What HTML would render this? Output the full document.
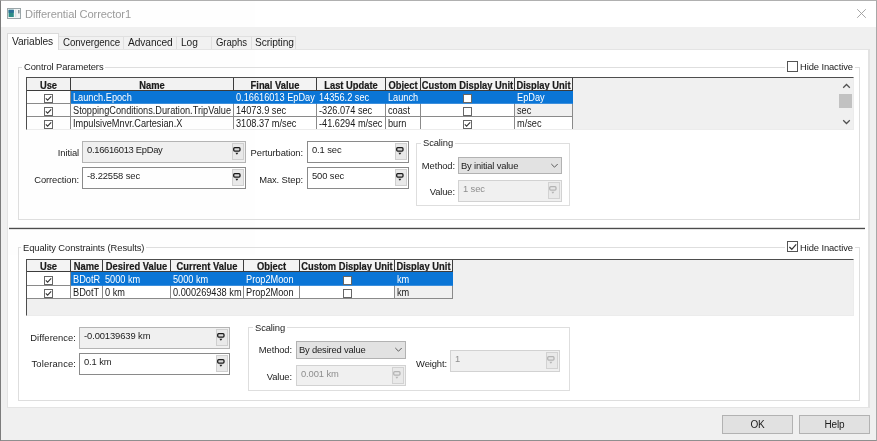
<!DOCTYPE html>
<html>
<head>
<meta charset="utf-8">
<title>Differential Corrector1</title>
<style>
html,body{margin:0;padding:0;}
body{width:877px;height:441px;overflow:hidden;background:#f0f0f0;font-family:"Liberation Sans",sans-serif;font-size:9.4px;letter-spacing:-0.1px;color:#1c1c1c;position:relative;}
.abs{position:absolute;}
#win{position:absolute;left:0;top:0;width:877px;height:441px;background:#f0f0f0;overflow:hidden;opacity:0.999;will-change:transform;}
#frame{position:absolute;left:0;top:0;width:877px;height:441px;box-sizing:border-box;border-top:1px solid #b0b0b0;border-left:1px solid #7c7c7c;border-right:1px solid #a8a8a8;border-bottom:1px solid #8f8f8f;z-index:20;pointer-events:none;}
#titlebar{position:absolute;left:0;top:0;width:877px;height:27px;background:#fff;}
#title{position:absolute;left:25px;top:8px;font-size:11.15px;letter-spacing:-0.12px;color:#9b9b9b;white-space:nowrap;line-height:13px;}
.tab{position:absolute;top:36px;height:14px;border:1px solid #e0e0e0;border-bottom:none;background:#f2f2f2;white-space:nowrap;box-sizing:border-box;font-size:10.2px;letter-spacing:-0.08px;line-height:12px;padding:0 0 0 4px;color:#1c1c1c;}
.tab.sel{top:33px;height:17px;background:#fff;z-index:3;line-height:15px;padding:0 0 0 4px;border-color:#dadada;}
#pane{position:absolute;left:7px;top:49px;width:863px;height:359px;background:#fff;border:1px solid #e4e4e4;border-right:2px solid #e2e2e2;box-sizing:border-box;}
.gb{position:absolute;border:1px solid #dedede;box-sizing:border-box;}
.gbl{position:absolute;background:#fff;white-space:nowrap;padding:0 2px;line-height:12px;}
.lbl{position:absolute;white-space:nowrap;line-height:12px;}
.inp{position:absolute;box-sizing:border-box;border:1px solid #8a8a8a;background:#fff;}
.inp.ro{background:#f0f0f0;border-color:#b4b4b4;}
.inp.dis{background:#f0f0f0;border-color:#d2d2d2;color:#8e8e8e;}
.inp .t{position:absolute;left:4px;top:2px;white-space:nowrap;line-height:12px;}
.ub{position:absolute;right:1px;top:1px;width:12px;height:17px;box-sizing:border-box;border:1px solid #cfcfcf;background:#e9e9e9;}
.dis .ub{border-color:#d2d2d2;background:#e9e9e9;}
.ub svg{position:absolute;left:0px;top:3px;}
.cmb{position:absolute;box-sizing:border-box;border:1px solid #b2b2b2;background:#e2e2e2;}
.cmb .t{position:absolute;left:2px;top:2px;white-space:nowrap;line-height:12px;letter-spacing:-0.17px;}
.cmb svg{position:absolute;right:2px;top:5px;}
.grid{position:absolute;box-sizing:border-box;background:#f0f0f0;border-top:1px solid #4d4d4d;border-left:1px solid #4d4d4d;border-right:1px solid #ececec;border-bottom:1px solid #ececec;overflow:hidden;font-size:10px;letter-spacing:0;color:#1a1a1a;}
.x{display:inline-block;transform:scaleX(0.92);transform-origin:0 50%;}
.h .x{position:absolute;left:-30px;right:-30px;top:0;text-align:center;transform-origin:50% 50%;transform:scaleX(0.935);-webkit-text-stroke:0.2px #1a1a1a;}
.s .cb{border-color:#e4e4e4;}
.cell{position:absolute;box-sizing:border-box;background:#fff;border-right:1px solid #8a8a8a;border-bottom:1px solid #8a8a8a;white-space:nowrap;overflow:hidden;padding-left:2px;}
.cell.h{background:#f3f3f3;font-weight:bold;text-align:center;padding-left:0;border-right:1px solid #3c3c3c;border-bottom:1px solid #3c3c3c;letter-spacing:0;}
.cell.s{background:#0a75d6;color:#fff;border-right-color:#0a75d6;border-bottom-color:#3d8fdc;}
.cell.g{background:#f0f0f0;}
.cb{position:absolute;box-sizing:border-box;border:1px solid #666;background:#fff;}
.cb svg{position:absolute;left:-1px;top:-1px;}
.btn{position:absolute;box-sizing:border-box;border:1px solid #b2b2b2;background:#e1e1e1;text-align:center;font-size:10px;letter-spacing:-0.1px;}
</style>
</head>
<body>
<div id="win">
  <div id="titlebar">
    <svg class="abs" style="left:7px;top:8px" width="14" height="11" viewBox="0 0 14 11">
      <rect x="0.5" y="0.5" width="13" height="10" fill="#f4f6f6" stroke="#9aa5a8"/>
      <rect x="1.6" y="1.8" width="5.2" height="7.2" fill="#2c8c86"/>
      <rect x="1.6" y="1.8" width="5.2" height="3" fill="#2a6f97"/>
      <rect x="11" y="2" width="1.6" height="3.4" fill="#8a979b"/>
      <rect x="8.4" y="1.8" width="0.8" height="7.2" fill="#c9d0d2"/>
    </svg>
    <div id="title">Differential Corrector1</div>
    <svg class="abs" style="left:856px;top:8px" width="11" height="11" viewBox="0 0 11 11"><path d="M1.2 1.2 L9.8 9.8 M9.8 1.2 L1.2 9.8" stroke="#9c9c9c" stroke-width="0.9" fill="none"/></svg>
  </div>
  <div class="tab sel" style="left:7px;width:52px;">Variables</div>
  <div class="tab" style="left:58px;width:66px;"><span style="display:inline-block;transform:scaleX(0.955);transform-origin:0 50%;">Convergence</span></div>
  <div class="tab" style="left:123px;width:54px;">Advanced</div>
  <div class="tab" style="left:176px;width:36px;">Log</div>
  <div class="tab" style="left:211px;width:41px;"><span style="display:inline-block;transform:scaleX(0.94);transform-origin:0 50%;">Graphs</span></div>
  <div class="tab" style="left:251px;width:45px;padding-left:3px;">Scripting</div>
  <div id="pane"></div>
<div class="gb" style="left:18px;top:67px;width:842px;height:153px;"></div>
<div class="gbl" style="left:22px;top:61px;">Control Parameters</div>
<div class="gbl" style="left:785px;top:61px;width:66px;height:12px;"></div>
<div class="cb" style="left:787px;top:61px;width:11px;height:11px;border-color:#555;"></div>
<div class="lbl" style="left:800px;top:61px;">Hide Inactive</div>
<div class="grid" style="left:26px;top:77px;width:828px;height:53px;">
<div class="cell h" style="left:0px;top:0;width:44px;height:13px;line-height:16px;"><span class="x">Use</span></div>
<div class="cell h" style="left:44px;top:0;width:163px;height:13px;line-height:16px;"><span class="x">Name</span></div>
<div class="cell h" style="left:207px;top:0;width:83px;height:13px;line-height:16px;"><span class="x">Final Value</span></div>
<div class="cell h" style="left:290px;top:0;width:69px;height:13px;line-height:16px;"><span class="x">Last Update</span></div>
<div class="cell h" style="left:359px;top:0;width:35px;height:13px;line-height:16px;"><span class="x">Object</span></div>
<div class="cell h" style="left:394px;top:0;width:94px;height:13px;line-height:16px;"><span class="x">Custom Display Unit</span></div>
<div class="cell h" style="left:488px;top:0;width:58px;height:13px;line-height:16px;"><span class="x">Display Unit</span></div>
<div class="cell" style="left:0px;top:13px;width:44px;height:13px;line-height:14px;"><div class="cb" style="left:17px;top:3px;width:9px;height:9px;border-color:#666;"><svg width="9" height="9" viewBox="0 0 9 9"><path d="M1.8 4.4 L3.6 6.2 L7.2 2.4" stroke="#333" stroke-width="1.1" fill="none"/></svg></div></div>
<div class="cell s" style="left:44px;top:13px;width:163px;height:13px;line-height:14px;"><span class="x">Launch.Epoch</span></div>
<div class="cell s" style="left:207px;top:13px;width:83px;height:13px;line-height:14px;"><span class="x">0.16616013 EpDay</span></div>
<div class="cell s" style="left:290px;top:13px;width:69px;height:13px;line-height:14px;"><span class="x">14356.2 sec</span></div>
<div class="cell s" style="left:359px;top:13px;width:35px;height:13px;line-height:14px;"><span class="x">Launch</span></div>
<div class="cell s" style="left:394px;top:13px;width:94px;height:13px;line-height:14px;"><div class="cb" style="left:42px;top:3px;width:9px;height:9px;border-color:#666;"></div></div>
<div class="cell s" style="left:488px;top:13px;width:58px;height:13px;line-height:14px;"><span class="x">EpDay</span></div>
<div class="cell" style="left:0px;top:26px;width:44px;height:13px;line-height:14px;"><div class="cb" style="left:17px;top:3px;width:9px;height:9px;border-color:#666;"><svg width="9" height="9" viewBox="0 0 9 9"><path d="M1.8 4.4 L3.6 6.2 L7.2 2.4" stroke="#333" stroke-width="1.1" fill="none"/></svg></div></div>
<div class="cell" style="left:44px;top:26px;width:163px;height:13px;line-height:14px;"><span class="x">StoppingConditions.Duration.TripValue</span></div>
<div class="cell" style="left:207px;top:26px;width:83px;height:13px;line-height:14px;"><span class="x">14073.9 sec</span></div>
<div class="cell" style="left:290px;top:26px;width:69px;height:13px;line-height:14px;"><span class="x">-326.074 sec</span></div>
<div class="cell" style="left:359px;top:26px;width:35px;height:13px;line-height:14px;"><span class="x">coast</span></div>
<div class="cell" style="left:394px;top:26px;width:94px;height:13px;line-height:14px;"><div class="cb" style="left:42px;top:3px;width:9px;height:9px;border-color:#666;"></div></div>
<div class="cell g" style="left:488px;top:26px;width:58px;height:13px;line-height:14px;"><span class="x">sec</span></div>
<div class="cell" style="left:0px;top:39px;width:44px;height:13px;line-height:14px;"><div class="cb" style="left:17px;top:3px;width:9px;height:9px;border-color:#666;"><svg width="9" height="9" viewBox="0 0 9 9"><path d="M1.8 4.4 L3.6 6.2 L7.2 2.4" stroke="#333" stroke-width="1.1" fill="none"/></svg></div></div>
<div class="cell" style="left:44px;top:39px;width:163px;height:13px;line-height:14px;"><span class="x">ImpulsiveMnvr.Cartesian.X</span></div>
<div class="cell" style="left:207px;top:39px;width:83px;height:13px;line-height:14px;"><span class="x">3108.37 m/sec</span></div>
<div class="cell" style="left:290px;top:39px;width:69px;height:13px;line-height:14px;"><span class="x">-41.6294 m/sec</span></div>
<div class="cell" style="left:359px;top:39px;width:35px;height:13px;line-height:14px;"><span class="x">burn</span></div>
<div class="cell" style="left:394px;top:39px;width:94px;height:13px;line-height:14px;"><div class="cb" style="left:42px;top:3px;width:9px;height:9px;border-color:#666;"><svg width="9" height="9" viewBox="0 0 9 9"><path d="M1.8 4.4 L3.6 6.2 L7.2 2.4" stroke="#333" stroke-width="1.1" fill="none"/></svg></div></div>
<div class="cell" style="left:488px;top:39px;width:58px;height:13px;line-height:14px;"><span class="x">m/sec</span></div>
<div class="abs" style="left:811px;top:0;width:16px;height:52px;background:#f0f0f0;">
      <svg class="abs" style="left:4px;top:5px" width="9" height="6" viewBox="0 0 9 6"><path d="M1.2 4.8 L4.5 1.5 L7.8 4.8" stroke="#505050" stroke-width="1.25" fill="none"/></svg>
      <div class="abs" style="left:1px;top:16px;width:13px;height:14px;background:#c2c2c2;"></div>
      <svg class="abs" style="left:4px;top:41px" width="9" height="6" viewBox="0 0 9 6"><path d="M1.2 1.2 L4.5 4.5 L7.8 1.2" stroke="#505050" stroke-width="1.25" fill="none"/></svg>
    </div>
</div>
<div class="lbl" style="right:798px;top:147px;">Initial</div>
<div class="inp ro" style="left:82px;top:141px;width:164px;height:22px;"><div class="t"><span style="letter-spacing:-0.3px">0.16616013 EpDay</span></div><div class="ub"><svg width="9" height="9" viewBox="0 0 9 9"><rect x="0.7" y="0.7" width="6.3" height="3.4" rx="1" fill="#d8d8d8" stroke="#1a1a1a" stroke-width="1.3"/><path d="M2.4 5.7 H5.4 L3.9 7.7 Z" fill="#1a1a1a"/></svg></div></div>
<div class="lbl" style="right:798px;top:174px;">Correction:</div>
<div class="inp " style="left:82px;top:167px;width:164px;height:22px;"><div class="t">-8.22558 sec</div><div class="ub"><svg width="9" height="9" viewBox="0 0 9 9"><rect x="0.7" y="0.7" width="6.3" height="3.4" rx="1" fill="#d8d8d8" stroke="#1a1a1a" stroke-width="1.3"/><path d="M2.4 5.7 H5.4 L3.9 7.7 Z" fill="#1a1a1a"/></svg></div></div>
<div class="lbl" style="right:574px;top:147px;">Perturbation:</div>
<div class="inp " style="left:307px;top:141px;width:102px;height:22px;"><div class="t">0.1 sec</div><div class="ub"><svg width="9" height="9" viewBox="0 0 9 9"><rect x="0.7" y="0.7" width="6.3" height="3.4" rx="1" fill="#d8d8d8" stroke="#1a1a1a" stroke-width="1.3"/><path d="M2.4 5.7 H5.4 L3.9 7.7 Z" fill="#1a1a1a"/></svg></div></div>
<div class="lbl" style="right:574px;top:174px;">Max. Step:</div>
<div class="inp " style="left:307px;top:167px;width:102px;height:22px;"><div class="t">500 sec</div><div class="ub"><svg width="9" height="9" viewBox="0 0 9 9"><rect x="0.7" y="0.7" width="6.3" height="3.4" rx="1" fill="#d8d8d8" stroke="#1a1a1a" stroke-width="1.3"/><path d="M2.4 5.7 H5.4 L3.9 7.7 Z" fill="#1a1a1a"/></svg></div></div>
<div class="gb" style="left:416px;top:143px;width:154px;height:63px;"></div>
<div class="gbl" style="left:421px;top:137px;">Scaling</div>
<div class="lbl" style="right:422px;top:160px;">Method:</div>
<div class="cmb" style="left:458px;top:157px;width:104px;height:17px;"><div class="t">By initial value</div><svg width="9" height="6" viewBox="0 0 9 6"><path d="M1.3 1 L4.5 4.2 L7.7 1" stroke="#5a5a5a" stroke-width="1" fill="none"/></svg></div>
<div class="lbl" style="right:422px;top:186px;">Value:</div>
<div class="inp dis" style="left:458px;top:180px;width:104px;height:22px;"><div class="t">1 sec</div><div class="ub"><svg width="9" height="9" viewBox="0 0 9 9"><rect x="0.7" y="0.7" width="6.3" height="3.4" rx="1" fill="#e6e6e6" stroke="#b4b4b4" stroke-width="1.3"/><path d="M2.4 5.7 H5.4 L3.9 7.7 Z" fill="#b4b4b4"/></svg></div></div>
<div class="abs" style="left:9px;top:227px;width:856px;height:3px;background:linear-gradient(#d9d9d9 0,#d9d9d9 33.3%,#4c4c4c 33.3%,#4c4c4c 66.6%,#e3e3e3 66.6%);"></div>
<div class="gb" style="left:18px;top:247px;width:842px;height:154px;"></div>
<div class="gbl" style="left:21px;top:242px;letter-spacing:-0.07px;">Equality Constraints (Results)</div>
<div class="gbl" style="left:785px;top:241px;width:66px;height:12px;"></div>
<div class="cb" style="left:787px;top:241px;width:11px;height:11px;border-color:#555;"><svg width="11" height="11" viewBox="0 0 11 11"><path d="M2.4 6 L4.8 8.3 L9.2 3.3" stroke="#333" stroke-width="1.2" fill="none"/></svg></div>
<div class="lbl" style="left:800px;top:242px;">Hide Inactive</div>
<div class="grid" style="left:26px;top:259px;width:828px;height:57px;">
<div class="cell h" style="left:0px;top:0;width:44px;height:12px;line-height:14px;"><span class="x">Use</span></div>
<div class="cell h" style="left:44px;top:0;width:32px;height:12px;line-height:14px;"><span class="x">Name</span></div>
<div class="cell h" style="left:76px;top:0;width:68px;height:12px;line-height:14px;"><span class="x">Desired Value</span></div>
<div class="cell h" style="left:144px;top:0;width:73px;height:12px;line-height:14px;"><span class="x">Current Value</span></div>
<div class="cell h" style="left:217px;top:0;width:56px;height:12px;line-height:14px;"><span class="x">Object</span></div>
<div class="cell h" style="left:273px;top:0;width:95px;height:12px;line-height:14px;"><span class="x">Custom Display Unit</span></div>
<div class="cell h" style="left:368px;top:0;width:58px;height:12px;line-height:14px;"><span class="x">Display Unit</span></div>
<div class="cell" style="left:0px;top:12px;width:44px;height:14px;line-height:15px;"><div class="cb" style="left:17px;top:4px;width:9px;height:9px;border-color:#666;"><svg width="9" height="9" viewBox="0 0 9 9"><path d="M1.8 4.4 L3.6 6.2 L7.2 2.4" stroke="#333" stroke-width="1.1" fill="none"/></svg></div></div>
<div class="cell s" style="left:44px;top:12px;width:32px;height:14px;line-height:15px;"><span class="x">BDotR</span></div>
<div class="cell s" style="left:76px;top:12px;width:68px;height:14px;line-height:15px;"><span class="x">5000 km</span></div>
<div class="cell s" style="left:144px;top:12px;width:73px;height:14px;line-height:15px;"><span class="x">5000 km</span></div>
<div class="cell s" style="left:217px;top:12px;width:56px;height:14px;line-height:15px;"><span class="x">Prop2Moon</span></div>
<div class="cell s" style="left:273px;top:12px;width:95px;height:14px;line-height:15px;"><div class="cb" style="left:43px;top:4px;width:9px;height:9px;border-color:#666;"></div></div>
<div class="cell s" style="left:368px;top:12px;width:58px;height:14px;line-height:15px;"><span class="x">km</span></div>
<div class="cell" style="left:0px;top:26px;width:44px;height:13px;line-height:14px;"><div class="cb" style="left:17px;top:3px;width:9px;height:9px;border-color:#666;"><svg width="9" height="9" viewBox="0 0 9 9"><path d="M1.8 4.4 L3.6 6.2 L7.2 2.4" stroke="#333" stroke-width="1.1" fill="none"/></svg></div></div>
<div class="cell" style="left:44px;top:26px;width:32px;height:13px;line-height:14px;"><span class="x">BDotT</span></div>
<div class="cell" style="left:76px;top:26px;width:68px;height:13px;line-height:14px;"><span class="x">0 km</span></div>
<div class="cell" style="left:144px;top:26px;width:73px;height:13px;line-height:14px;"><span class="x">0.000269438 km</span></div>
<div class="cell" style="left:217px;top:26px;width:56px;height:13px;line-height:14px;"><span class="x">Prop2Moon</span></div>
<div class="cell" style="left:273px;top:26px;width:95px;height:13px;line-height:14px;"><div class="cb" style="left:43px;top:3px;width:9px;height:9px;border-color:#666;"></div></div>
<div class="cell g" style="left:368px;top:26px;width:58px;height:13px;line-height:14px;"><span class="x">km</span></div>
</div>
<div class="lbl" style="right:801px;top:332px;"><span style="letter-spacing:0.05px">Difference:</span></div>
<div class="inp ro" style="left:79px;top:327px;width:151px;height:22px;"><div class="t">-0.00139639 km</div><div class="ub"><svg width="9" height="9" viewBox="0 0 9 9"><rect x="0.7" y="0.7" width="6.3" height="3.4" rx="1" fill="#d8d8d8" stroke="#1a1a1a" stroke-width="1.3"/><path d="M2.4 5.7 H5.4 L3.9 7.7 Z" fill="#1a1a1a"/></svg></div></div>
<div class="lbl" style="right:801px;top:358px;"><span style="letter-spacing:0.12px">Tolerance:</span></div>
<div class="inp " style="left:79px;top:353px;width:151px;height:22px;"><div class="t">0.1 km</div><div class="ub"><svg width="9" height="9" viewBox="0 0 9 9"><rect x="0.7" y="0.7" width="6.3" height="3.4" rx="1" fill="#d8d8d8" stroke="#1a1a1a" stroke-width="1.3"/><path d="M2.4 5.7 H5.4 L3.9 7.7 Z" fill="#1a1a1a"/></svg></div></div>
<div class="gb" style="left:248px;top:327px;width:322px;height:64px;"></div>
<div class="gbl" style="left:253px;top:322px;">Scaling</div>
<div class="lbl" style="right:585px;top:344px;">Method:</div>
<div class="cmb" style="left:296px;top:341px;width:110px;height:18px;"><div class="t">By desired value</div><svg width="9" height="6" viewBox="0 0 9 6"><path d="M1.3 1 L4.5 4.2 L7.7 1" stroke="#5a5a5a" stroke-width="1" fill="none"/></svg></div>
<div class="lbl" style="right:585px;top:371px;">Value:</div>
<div class="inp dis" style="left:296px;top:365px;width:110px;height:21px;"><div class="t">0.001 km</div><div class="ub"><svg width="9" height="9" viewBox="0 0 9 9"><rect x="0.7" y="0.7" width="6.3" height="3.4" rx="1" fill="#e6e6e6" stroke="#b4b4b4" stroke-width="1.3"/><path d="M2.4 5.7 H5.4 L3.9 7.7 Z" fill="#b4b4b4"/></svg></div></div>
<div class="lbl" style="right:430px;top:358px;">Weight:</div>
<div class="inp dis" style="left:450px;top:350px;width:110px;height:22px;"><div class="t">1</div><div class="ub"><svg width="9" height="9" viewBox="0 0 9 9"><rect x="0.7" y="0.7" width="6.3" height="3.4" rx="1" fill="#e6e6e6" stroke="#b4b4b4" stroke-width="1.3"/><path d="M2.4 5.7 H5.4 L3.9 7.7 Z" fill="#b4b4b4"/></svg></div></div>
<div class="btn" style="left:722px;top:415px;width:71px;height:19px;line-height:18px;">OK</div>
<div class="btn" style="left:799px;top:415px;width:71px;height:19px;line-height:18px;">Help</div>
<div id="frame"></div>
</div>
</body>
</html>
